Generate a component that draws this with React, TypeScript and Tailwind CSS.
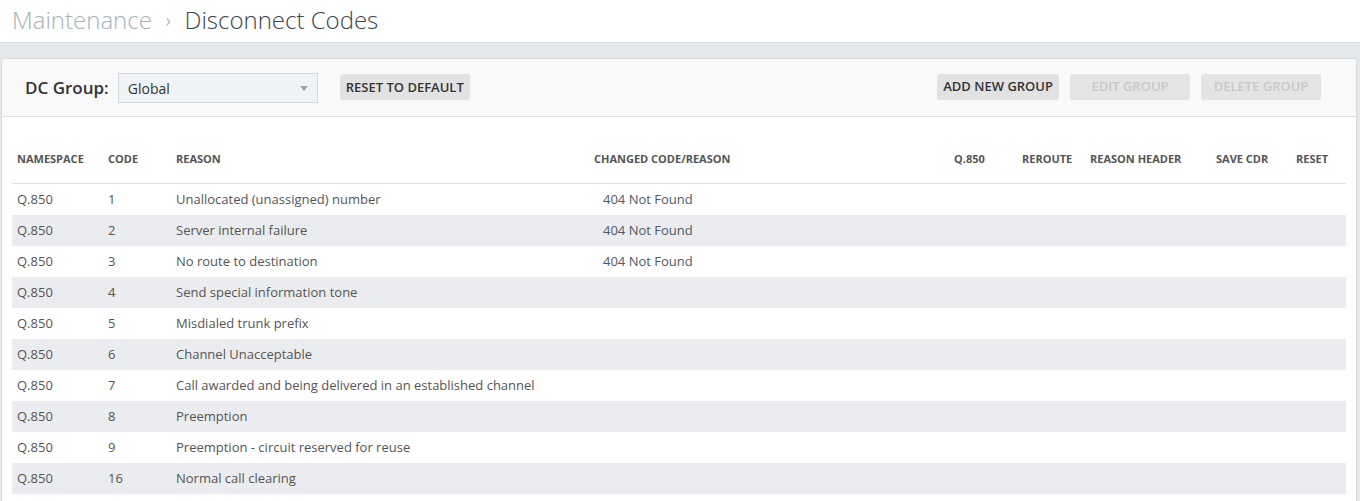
import React from 'react';

type Row = {
    code: string;
    reason: string;
    changed?: string;
};

const rows: Row[] = [
    { code: '1', reason: 'Unallocated (unassigned) number', changed: '404 Not Found' },
    { code: '2', reason: 'Server internal failure', changed: '404 Not Found' },
    { code: '3', reason: 'No route to destination', changed: '404 Not Found' },
    { code: '4', reason: 'Send special information tone' },
    { code: '5', reason: 'Misdialed trunk prefix' },
    { code: '6', reason: 'Channel Unacceptable' },
    { code: '7', reason: 'Call awarded and being delivered in an established channel' },
    { code: '8', reason: 'Preemption' },
    { code: '9', reason: 'Preemption - circuit reserved for reuse' },
    { code: '16', reason: 'Normal call clearing' },
];

const cols = 'grid grid-cols-[91px_68px_418px_360px_68px_68px_126px_80px_55px]';

const headers = ['Namespace', 'Code', 'Reason', 'Changed Code/Reason', 'Q.850', 'Reroute', 'Reason Header', 'Save CDR', 'Reset'];

const Button = ({ label, disabled }: { label: string; disabled?: boolean }) => (
    <button
        className={
            disabled
                ? 'h-[26px] w-[120px] rounded-[3px] bg-[#e4e4e4] text-[13px] font-semibold text-[#c9c9c9]'
                : 'h-[26px] px-[6px] rounded-[3px] bg-[#e2e2e2] text-[13px] font-semibold text-[#333]'
        }
    >
        {label}
    </button>
);

const App = () => {
    return (
        <div className="min-h-[501px] bg-[#e5e8eb] font-['Open_Sans',sans-serif] overflow-hidden">
            {/* page title */}
            <div className="h-[43px] bg-white border-b border-[#dde0e3] pl-[12px] pb-[2px] flex items-center text-[24px] font-light">
                <span className="text-[#a8b1b8]">Maintenance</span>
                <span className="mx-[14px] text-[#8a949c] text-[18px]">›</span>
                <span className="text-[#3b4550]">Disconnect Codes</span>
            </div>

            <div className="pt-[15px] pl-[1px] pr-[3px]">
                <div className="border border-[#d9dcdf] bg-white">
                    {/* toolbar */}
                    <div className="h-[58px] bg-[#f9f9f9] border-b border-[#dcdcdc] flex items-center pl-[23px] pr-[35px]">
                        <span className="text-[17px] font-semibold text-[#333]">DC Group:</span>
                        <div className="ml-[9px] h-[30px] w-[200px] bg-[#f0f3f5] border border-[#d6dade] flex items-center justify-between pl-[9px] pr-[9px]">
                            <span className="text-[14px] text-[#333] mt-[2px]">Global</span>
                            <svg width="8" height="5" viewBox="0 0 8 5" className="mt-[1px]">
                                <path d="M0 0h8L4 5z" fill="#9aa1a7" />
                            </svg>
                        </div>
                        <div className="ml-[22px] mb-[1px]">
                            <Button label="RESET TO DEFAULT" />
                        </div>
                        <div className="ml-auto mb-[1px] flex gap-[11px]">
                            <Button label="ADD NEW GROUP" />
                            <Button label="EDIT GROUP" disabled />
                            <Button label="DELETE GROUP" disabled />
                        </div>
                    </div>

                    {/* table */}
                    <div className="px-[10px] pb-[10px]">
                        <div className={`${cols} h-[67px] items-center border-b border-[#e0e0e0] pt-[18px]`}>
                            {headers.map((h) => (
                                <div key={h} className="pl-[5px] text-[11px] font-bold uppercase text-[#555]">
                                    {h}
                                </div>
                            ))}
                        </div>
                        {rows.map((r, i) => (
                            <div
                                key={r.code}
                                className={`${cols} h-[31px] items-center text-[13px] text-[#555] ${i % 2 === 1 ? 'bg-[#ebecef]' : 'bg-white'}`}
                            >
                                <div className="pl-[5px]">Q.850</div>
                                <div className="pl-[5px]">{r.code}</div>
                                <div className="pl-[5px]">{r.reason}</div>
                                <div className="pl-[14px] text-[#4f5a66]">{r.changed ?? ''}</div>
                                <div />
                                <div />
                                <div />
                                <div />
                                <div />
                            </div>
                        ))}
                    </div>
                </div>
            </div>
        </div>
    );
};

export default App;
